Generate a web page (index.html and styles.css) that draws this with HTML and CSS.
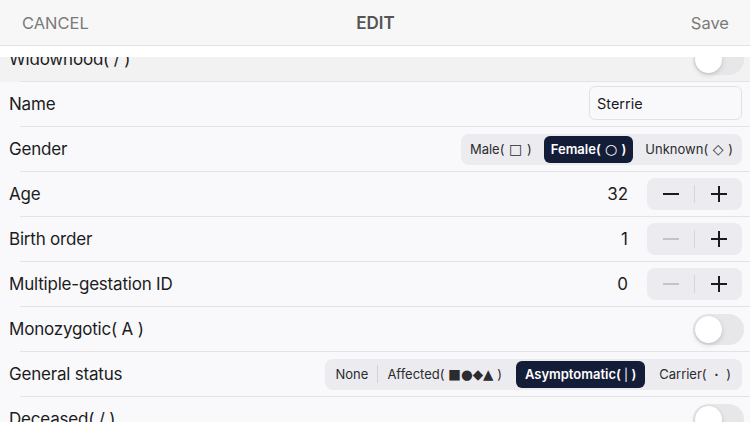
FILE: index.html
```html
<!DOCTYPE html>
<html>
<head>
<meta charset="utf-8">
<link rel="stylesheet" href="styles.css">
</head>
<body>
<header class="nav">
  <span class="nav-btn">CANCEL</span>
  <span class="nav-title">EDIT</span>
  <span class="nav-btn save">Save</span>
</header>
<div class="band"></div>
<main class="list">
  <div class="row dim first">
    <span class="label">Widowhood( / )</span>
    <span class="toggle"><span class="knob"></span></span>
  </div>
  <div class="row">
    <span class="label">Name</span>
    <span class="input">Sterrie</span>
  </div>
  <div class="row">
    <span class="label">Gender</span>
    <div class="seg gender">
      <span class="opt">Male( <span class="sym lg">□</span> )</span>
      <span class="opt on">Female( <span class="sym lg">○</span> )</span>
      <span class="opt">Unknown( <span class="sym lg">◇</span> )</span>
    </div>
  </div>
  <div class="row">
    <span class="label">Age</span>
    <div class="right">
      <span class="value">32</span>
      <div class="stepper">
        <span class="step"><svg width="16" height="16" viewBox="0 0 16 16"><path d="M0 8h16" stroke="#1c1c1e" stroke-width="2"/></svg></span>
        <span class="div"></span>
        <span class="step"><svg width="16" height="16" viewBox="0 0 16 16"><path d="M0 8h16M8 0v16" stroke="#1c1c1e" stroke-width="2"/></svg></span>
      </div>
    </div>
  </div>
  <div class="row">
    <span class="label">Birth order</span>
    <div class="right">
      <span class="value">1</span>
      <div class="stepper">
        <span class="step"><svg width="16" height="16" viewBox="0 0 16 16"><path d="M0 8h16" stroke="#c4c4c8" stroke-width="2"/></svg></span>
        <span class="div"></span>
        <span class="step"><svg width="16" height="16" viewBox="0 0 16 16"><path d="M0 8h16M8 0v16" stroke="#1c1c1e" stroke-width="2"/></svg></span>
      </div>
    </div>
  </div>
  <div class="row">
    <span class="label">Multiple-gestation ID</span>
    <div class="right">
      <span class="value">0</span>
      <div class="stepper">
        <span class="step"><svg width="16" height="16" viewBox="0 0 16 16"><path d="M0 8h16" stroke="#c4c4c8" stroke-width="2"/></svg></span>
        <span class="div"></span>
        <span class="step"><svg width="16" height="16" viewBox="0 0 16 16"><path d="M0 8h16M8 0v16" stroke="#1c1c1e" stroke-width="2"/></svg></span>
      </div>
    </div>
  </div>
  <div class="row">
    <span class="label">Monozygotic( A )</span>
    <span class="toggle"><span class="knob"></span></span>
  </div>
  <div class="row">
    <span class="label">General status</span>
    <div class="seg">
      <span class="opt">None</span>
      <span class="sdiv"></span>
      <span class="opt">Affected( <span class="sym">■●◆▲</span> )</span>
      <span class="opt on">Asymptomatic( <span class="pipe">|</span> )</span>
      <span class="opt">Carrier( <span class="dot">·</span> )</span>
    </div>
  </div>
  <div class="row">
    <span class="label">Deceased( / )</span>
    <span class="toggle"><span class="knob"></span></span>
  </div>
</main>
</body>
</html>
```
FILE: styles.css
```css
* { box-sizing: border-box; }
html, body { margin: 0; padding: 0; }
body {
  width: 750px;
  height: 422px;
  overflow: hidden;
  background: #f9f9fb;
  font-family: Inter, "Noto Sans", "DejaVu Sans", sans-serif;
  color: #1c1c1e;
}
.nav {
  height: 46px;
  background: #f7f7f7;
  border-bottom: 1px solid #e2e2e2;
  display: flex;
  align-items: center;
  justify-content: space-between;
  padding: 1px 21px 0 22px;
}
.nav-btn {
  font-size: 16.5px;
  color: #7a7a7a;
  width: 80px;
}
.nav-btn.save { text-align: right; }
.nav-title {
  font-size: 17px;
  font-weight: 600;
  color: #555;
}
.band { height: 11px; background: #ffffff; }
.list {
  height: 365px;
  overflow: hidden;
}
.row {
  height: 45px;
  display: flex;
  align-items: center;
  justify-content: space-between;
  padding: 0 8px 1px 9px;
  background-image: linear-gradient(#e3e3e6, #e3e3e6);
  background-repeat: no-repeat;
  background-position: 20px 100%;
  background-size: calc(100% - 20px) 1px;
}
.row.first { margin-top: -20px; }
.row.dim { background-color: #f2f2f3; }
.label { font-size: 17px; letter-spacing: -0.2px; }
.toggle {
  width: 51px;
  height: 31px;
  border-radius: 16px;
  background: #e7e7ea;
  margin-right: -2px;
  padding: 2px;
  display: flex;
}
.knob {
  width: 27px;
  height: 27px;
  border-radius: 50%;
  background: #fff;
  box-shadow: 0 2px 5px rgba(0,0,0,0.15), 0 0 1px rgba(0,0,0,0.1);
}
.input {
  width: 153px;
  height: 34px;
  border: 1px solid #e2e2e5;
  border-radius: 6px;
  background: #f9f9fb;
  font-size: 14.5px;
  display: flex;
  align-items: center;
  padding-left: 7px;
  margin-top: -2px;
}
.seg {
  height: 31px;
  background: #ebebf0;
  border-radius: 8px;
  display: flex;
  align-items: center;
  padding: 2px;
  font-size: 13px;
}
.opt {
  height: 27px;
  display: flex;
  align-items: center;
  padding: 0 9px;
  color: #2c2c2e;
  border-radius: 6px;
  white-space: pre;
}
.gender .opt { padding: 0 7px; }
.opt.on {
  background: #141d38;
  color: #fff;
  font-weight: 600;
  margin: 0 5px;
}
.sym { font-family: "DejaVu Sans", sans-serif; font-size: 13.5px; font-weight: normal; }
.sym.lg { font-size: 14px; padding: 0 1px; }
.pipe { font-weight: 400; font-size: 12px; }
.dot { font-weight: 700; padding: 0 4px; }
.sdiv { width: 1px; height: 18px; background: #d2d2d7; }
.right { display: flex; align-items: center; gap: 19px; }
.value { font-size: 17px; }
.stepper {
  width: 95px;
  height: 32px;
  background: #ebebf0;
  border-radius: 8px;
  display: flex;
  align-items: center;
}
.step {
  flex: 1;
  display: flex;
  align-items: center;
  justify-content: center;
}
.step svg { display: block; }
.div { width: 1px; height: 18px; background: #d6d6da; }
```
